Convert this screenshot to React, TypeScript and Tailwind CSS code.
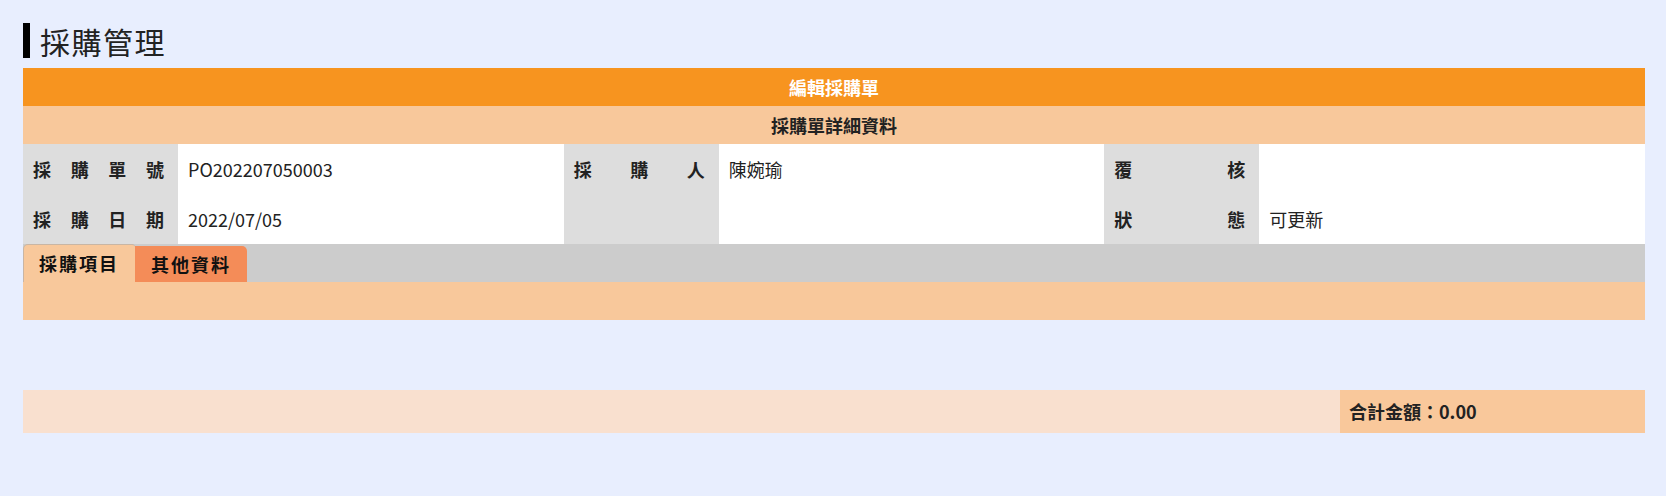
const font = { fontFamily: '"Noto Sans CJK TC", "Noto Sans", sans-serif' };

function Label({ text }: { text: string }) {
  return (
    <td className="w-[155px] bg-[#dddddd] pl-[10px] pr-[14px] font-bold text-[18px] text-[#222] [text-align-last:justify] align-middle">
      {text}
    </td>
  );
}

function Value({ text }: { text?: string }) {
  return <td className="bg-white px-[10px] text-[18px] text-[#222] align-middle">{text}</td>;
}

export default function App() {
  return (
    <div className="min-h-[496px] w-full bg-[#e8eefe] pl-[23px] pr-[21px] pt-[23px]" style={font}>
      <h1 className="flex items-center h-[35px] border-l-[7px] border-black pl-[10px] text-[30px] leading-none text-[#222] tracking-[1.5px]">
        採購管理
      </h1>

      <div className="mt-[10px]">
        <div className="h-[38px] bg-[#f7941f] flex items-center justify-center text-white font-bold text-[18px]">
          編輯採購單
        </div>
        <div className="h-[38px] bg-[#f8c89b] flex items-center justify-center text-[#222] font-bold text-[18px]">
          採購單詳細資料
        </div>

        <table className="w-full table-fixed border-collapse">
          <colgroup>
            <col className="w-[155px]" />
            <col />
            <col className="w-[155px]" />
            <col />
            <col className="w-[155px]" />
            <col />
          </colgroup>
          <tbody>
            <tr className="h-[50px]">
              <Label text="採購單號" />
              <Value text="PO202207050003" />
              <Label text="採購人" />
              <Value text="陳婉瑜" />
              <Label text="覆核" />
              <Value />
            </tr>
            <tr className="h-[50px]">
              <Label text="採購日期" />
              <Value text="2022/07/05" />
              <td className="bg-[#dddddd]" />
              <Value />
              <Label text="狀態" />
              <Value text="可更新" />
            </tr>
          </tbody>
        </table>

        <div className="h-[38px] bg-[#cccccc] flex items-end">
          <div className="h-[38px] w-[112px] bg-[#f8c89b] rounded-tl-[5px] rounded-tr-[3px] border-t border-l border-[#aaaaaa]/60 flex items-center pl-[15px] font-bold text-[18px] tracking-[2px] text-[#111]">
            採購項目
          </div>
          <div className="h-[36px] w-[112px] bg-[#f48c58] rounded-tr-[5px] flex items-center pl-[16px] font-bold text-[18px] tracking-[2px] text-[#111]">
            其他資料
          </div>
        </div>
        <div className="h-[38px] bg-[#f8c89b]" />
      </div>

      <div className="mt-[70px] h-[43px] flex">
        <div className="flex-1 bg-[#f9e0cf]" />
        <div className="w-[305px] bg-[#f9c89b] flex items-center pl-[9px] font-bold text-[18px] text-[#222]">
          合計金額：0.00
        </div>
      </div>
    </div>
  );
}
